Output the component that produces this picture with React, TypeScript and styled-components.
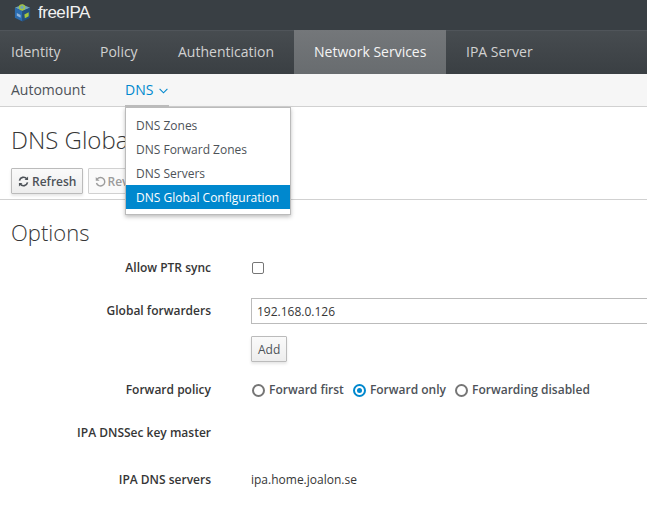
import React from 'react';
import styled, { createGlobalStyle } from 'styled-components';

const GlobalStyle = createGlobalStyle`
  html, body {
    margin: 0;
    padding: 0;
    height: 100%;
    overflow: hidden;
    background: #fff;
    font-family: "Open Sans", "Liberation Sans", sans-serif;
    font-size: 12px;
    color: #363636;
  }
`;

const Page = styled.div`
  position: relative;
  width: 647px;
  height: 515px;
  overflow: hidden;
`;

const TopBar = styled.div`
  height: 30px;
  box-sizing: border-box;
  background: #393f44;
  display: flex;
  align-items: center;
  padding: 0 0 5px 13px;
  gap: 6px;
`;

const Brand = styled.span`
  font-family: "Liberation Sans", sans-serif;
  font-size: 17px;
  letter-spacing: -0.5px;
  color: #f2f2f2;
`;

const MainNav = styled.nav`
  height: 44px;
  box-sizing: border-box;
  display: flex;
  background: linear-gradient(#474c50, #3a3f43);
  border-top: 1px solid #50555a;
`;

const MainItem = styled.div<{ $active?: boolean; $width: number; $inset: number }>`
  width: ${({ $width }) => $width}px;
  box-sizing: border-box;
  margin-top: ${({ $active }) => ($active ? '-1px' : '0')};
  padding: 0 0 2px ${({ $inset }) => $inset}px;
  display: flex;
  align-items: center;
  font-size: 14px;
  color: ${({ $active }) => ($active ? '#f5f5f5' : '#d1d1d1')};
  background: ${({ $active }) => ($active ? 'linear-gradient(#74777a, #686c6f)' : 'none')};
`;

const SubNav = styled.nav`
  height: 33px;
  box-sizing: border-box;
  display: flex;
  background: #f6f6f6;
  border-bottom: 1px solid #d1d1d1;
`;

const SubItem = styled.div<{ $active?: boolean; $width: number }>`
  width: ${({ $width }) => $width}px;
  box-sizing: border-box;
  padding: 0 0 2px 11px;
  display: flex;
  align-items: center;
  gap: 5px;
  font-size: 14px;
  color: ${({ $active }) => ($active ? '#0088ce' : '#4d5258')};

  svg {
    margin: 3px 0 0 1px;
  }
`;

const Menu = styled.ul`
  position: absolute;
  left: 125px;
  top: 107px;
  width: 166px;
  height: 108px;
  box-sizing: border-box;
  margin: 0;
  padding: 5px 0 0;
  list-style: none;
  background: #fff;
  border: 1px solid #bbb;
  box-shadow: 0 2px 4px rgba(3, 3, 3, 0.25);
  z-index: 2;

  &::before {
    content: '';
    position: absolute;
    left: -1px;
    top: -3px;
    width: 44px;
    height: 2px;
    background: #bbb;
  }
`;

const MenuItem = styled.li<{ $active?: boolean }>`
  height: 24px;
  padding-left: 10px;
  display: flex;
  align-items: center;
  font-size: 12px;
  white-space: nowrap;
  color: ${({ $active }) => ($active ? '#fff' : '#4d5258')};
  background: ${({ $active }) => ($active ? '#0088ce' : 'transparent')};
`;

const TitleRow = styled.div`
  padding: 16px 0 0 11px;
  height: 61px;
  box-sizing: border-box;
`;

const Title = styled.h1`
  margin: 0;
  font-size: 24px;
  line-height: 33px;
  font-weight: 300;
  color: #363636;
  white-space: nowrap;
`;

const Toolbar = styled.div`
  height: 32px;
  box-sizing: border-box;
  padding-left: 11px;
  display: flex;
  align-items: flex-start;
  gap: 5px;
  border-bottom: 1px solid #d1d1d1;
`;

const Button = styled.button<{ $disabled?: boolean }>`
  height: 26px;
  box-sizing: border-box;
  padding: 0 6px;
  display: inline-flex;
  align-items: center;
  gap: ${({ $disabled }) => ($disabled ? '1px' : '3px')};
  font-family: inherit;
  font-size: 12px;
  font-weight: 600;
  color: ${({ $disabled }) => ($disabled ? '#9c9c9c' : '#4d5258')};
  background: ${({ $disabled }) => ($disabled ? '#fafafa' : 'linear-gradient(#fafafa, #ededed)')};
  border: 1px solid ${({ $disabled }) => ($disabled ? '#d1d1d1' : '#bbb')};
  box-shadow: ${({ $disabled }) => ($disabled ? 'none' : '0 2px 3px rgba(3, 3, 3, 0.1)')};
  border-radius: 1px;
`;

const AddButton = styled(Button)`
  padding: 0 6px;
  font-weight: 400;
`;

const Section = styled.section`
  padding: 17px 0 0 11px;
`;

const SectionTitle = styled.h2`
  margin: 0 0 9px;
  font-size: 22px;
  line-height: 30px;
  font-weight: 300;
  color: #363636;
`;

const Row = styled.div<{ $height: number }>`
  display: grid;
  grid-template-columns: 200px 1fr;
  column-gap: 40px;
  min-height: ${({ $height }) => $height}px;
  align-items: start;
`;

const Label = styled.div`
  text-align: right;
  font-weight: 600;
  line-height: 18px;
  white-space: nowrap;
  padding-top: 3px;
`;

const Value = styled.div`
  line-height: 18px;
  padding-top: 3px;
  display: flex;
  align-items: center;
`;

const FieldStack = styled.div`
  display: flex;
  flex-direction: column;
  align-items: flex-start;
  gap: 12px;
  margin-top: -1px;
`;

const TextField = styled.div`
  width: 420px;
  height: 26px;
  box-sizing: border-box;
  padding-left: 5px;
  display: flex;
  align-items: center;
  border: 1px solid #bbb;
  font-size: 12px;
`;

const Checkbox = styled.span`
  width: 12px;
  height: 12px;
  box-sizing: border-box;
  margin: 3px 0 0 1px;
  border: 1px solid #767676;
  border-radius: 2px;
`;

const RadioGroup = styled.div`
  display: flex;
  align-items: center;
  gap: 9px;
  margin-left: 1px;
`;

const RadioOption = styled.label`
  display: flex;
  align-items: center;
  gap: 4px;
  font-weight: 600;
  color: #4d5258;
  white-space: nowrap;
`;

const RadioMark = styled.span<{ $checked?: boolean }>`
  width: 13px;
  height: 13px;
  box-sizing: border-box;
  border-radius: 50%;
  border: ${({ $checked }) => ($checked ? '2px solid #0088ce' : '2px solid #767676')};
  display: flex;
  align-items: center;
  justify-content: center;

  &::after {
    content: '';
    width: 5px;
    height: 5px;
    border-radius: 50%;
    background: ${({ $checked }) => ($checked ? '#0088ce' : 'transparent')};
  }
`;

const Logo = () => (
  <svg width="19" height="19" viewBox="0 0 20 20">
    <path d="M2 5 L10 1.5 L18 5 L10 8.5 Z" fill="#6fa3b8" />
    <path d="M2 5 L10 8.5 V19.5 L2 15.5 Z" fill="#2a6cb0" />
    <path d="M18 5 L10 8.5 V19.5 L18 15.5 Z" fill="#23507f" />
    <circle cx="9.5" cy="4.5" r="2.6" fill="none" stroke="#a5c63b" strokeWidth="1.4" />
    <path d="M12 12 L16.5 9.8 V14 L12.5 16 Z" fill="#a5c63b" />
    <path d="M4 10.5 L8 12.5 V15.5 L4 13.5 Z" fill="#8fb3d9" />
  </svg>
);

const Chevron = () => (
  <svg width="9" height="6" viewBox="0 0 9 6" fill="none" stroke="#0088ce" strokeWidth="1.1">
    <path d="M0.6 0.8 L4.5 4.8 L8.4 0.8" />
  </svg>
);

const RefreshIcon = () => (
  <svg width="11" height="11" viewBox="0 0 12 12" fill="none" stroke="#4d5258" strokeWidth="1.8">
    <path d="M1.6 5 A4.5 4.5 0 0 1 9.6 3.2" />
    <path d="M10.4 7 A4.5 4.5 0 0 1 2.4 8.8" />
    <path d="M11 0.6 V4.4 H7.2 Z" fill="#4d5258" stroke="none" />
    <path d="M1 11.4 V7.6 H4.8 Z" fill="#4d5258" stroke="none" />
  </svg>
);

const UndoIcon = () => (
  <svg width="11" height="11" viewBox="0 0 12 12" fill="none" stroke="#9c9c9c" strokeWidth="1.5">
    <path d="M2.4 3.4 A4.6 4.6 0 1 1 1.6 7.6" />
    <path d="M0.8 1 V5.2 H5 Z" fill="#9c9c9c" stroke="none" />
  </svg>
);

const mainItems = [
  { label: 'Identity', width: 89, inset: 11 },
  { label: 'Policy', width: 78, inset: 11 },
  { label: 'Authentication', width: 127, inset: 11 },
  { label: 'Network Services', width: 152, inset: 20, active: true },
  { label: 'IPA Server', width: 120, inset: 20 }
];

const menuItems = ['DNS Zones', 'DNS Forward Zones', 'DNS Servers', 'DNS Global Configuration'];

const App: React.FC = () => (
  <Page>
    <GlobalStyle />
    <TopBar>
      <Logo />
      <Brand>freeIPA</Brand>
    </TopBar>
    <MainNav>
      {mainItems.map((item) => (
        <MainItem key={item.label} $width={item.width} $inset={item.inset} $active={item.active}>
          {item.label}
        </MainItem>
      ))}
    </MainNav>
    <SubNav>
      <SubItem $width={114}>Automount</SubItem>
      <SubItem $width={100} $active>
        DNS <Chevron />
      </SubItem>
    </SubNav>
    <Menu>
      {menuItems.map((item, i) => (
        <MenuItem key={item} $active={i === menuItems.length - 1}>
          {item}
        </MenuItem>
      ))}
    </Menu>

    <TitleRow>
      <Title>DNS Global Configuration</Title>
    </TitleRow>
    <Toolbar>
      <Button>
        <RefreshIcon />
        Refresh
      </Button>
      <Button $disabled>
        <UndoIcon />
        Revert
      </Button>
    </Toolbar>

    <Section>
      <SectionTitle>Options</SectionTitle>
      <Row $height={43}>
        <Label>Allow PTR sync</Label>
        <Value>
          <Checkbox />
        </Value>
      </Row>
      <Row $height={79}>
        <Label>Global forwarders</Label>
        <FieldStack>
          <TextField>192.168.0.126</TextField>
          <AddButton>Add</AddButton>
        </FieldStack>
      </Row>
      <Row $height={43}>
        <Label>Forward policy</Label>
        <Value>
          <RadioGroup>
            <RadioOption>
              <RadioMark />
              Forward first
            </RadioOption>
            <RadioOption>
              <RadioMark $checked />
              Forward only
            </RadioOption>
            <RadioOption>
              <RadioMark />
              Forwarding disabled
            </RadioOption>
          </RadioGroup>
        </Value>
      </Row>
      <Row $height={47}>
        <Label>IPA DNSSec key master</Label>
        <Value />
      </Row>
      <Row $height={30}>
        <Label>IPA DNS servers</Label>
        <Value>ipa.home.joalon.se</Value>
      </Row>
    </Section>
  </Page>
);

export default App;
